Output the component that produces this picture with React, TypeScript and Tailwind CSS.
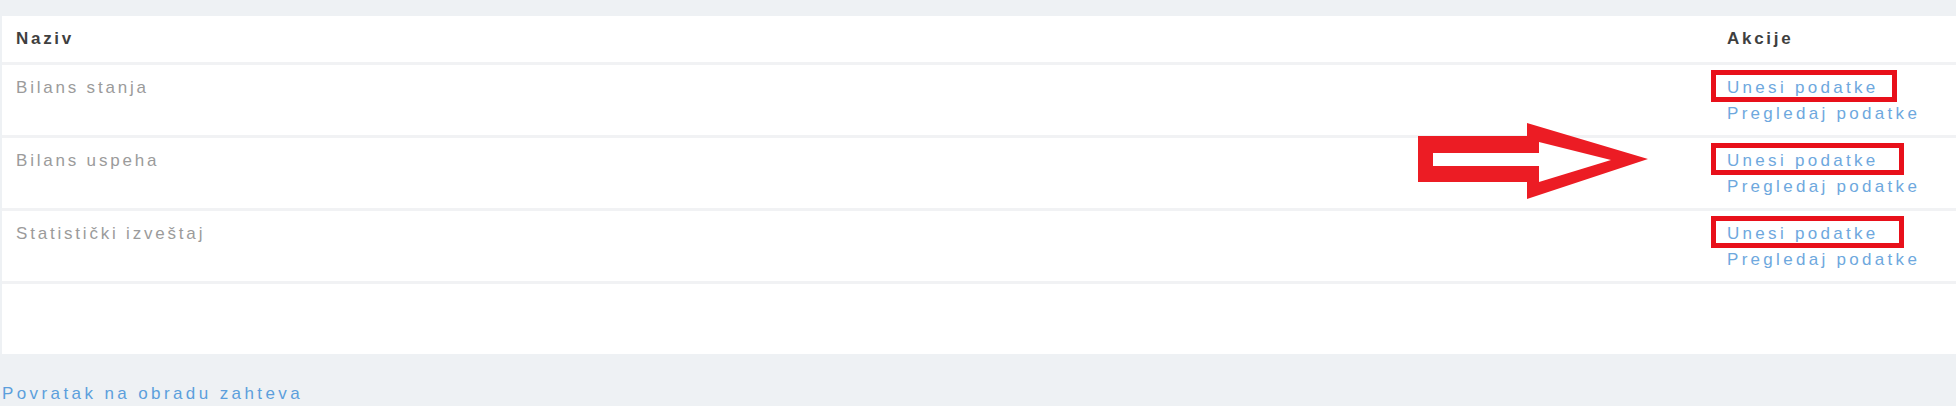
import React from 'react'

type Izvestaj = {
  naziv: string
  boxWidth: string
}

const izvestaji: Izvestaj[] = [
  { naziv: 'Bilans stanja', boxWidth: 'w-[186px]' },
  { naziv: 'Bilans uspeha', boxWidth: 'w-[193px]' },
  { naziv: 'Statistički izveštaj', boxWidth: 'w-[193px]' },
]

const RedArrow = () => (
  <svg
    className="absolute left-[1410px] top-[115px]"
    width="250"
    height="95"
    viewBox="1410 115 250 95"
    aria-hidden="true"
  >
    <polygon
      points="1418,136 1527,136 1527,123 1648,159 1527,199 1527,182 1418,182"
      fill="#ec1c24"
    />
    <polygon
      points="1433,153 1539,153 1539,142 1611,160 1539,182 1539,166 1433,166"
      fill="#ffffff"
    />
  </svg>
)

export default function App() {
  return (
    <div className="relative w-full h-[406px] overflow-hidden bg-[#eef1f4] pt-[16px] font-['Liberation_Sans',Arial,sans-serif] text-[17px]">
      <div className="ml-[2px] bg-white">
        <div className="flex h-[46px] items-center font-bold text-[#3f3f3f] tracking-[2.7px]">
          <div className="flex-1 pl-[14px]">Naziv</div>
          <div className="w-[229px]">Akcije</div>
        </div>

        {izvestaji.map((r) => (
          <div key={r.naziv} className="flex border-t-[3px] border-[#f1f2f4] pt-[10px] pb-[8px] leading-[26px]">
            <div className="flex-1 pl-[14px] text-[#9b9b9b] tracking-[2.8px]">{r.naziv}</div>
            <div className="w-[229px] flex flex-col items-start text-[#6ea8de] tracking-[3.3px]">
              <a className="relative inline-block">
                Unesi podatke
                <span
                  className={`absolute left-[-16px] top-[-5px] h-[32px] ${r.boxWidth} border-[5px] border-[#e8101a]`}
                />
              </a>
              <a>Pregledaj podatke</a>
            </div>
          </div>
        ))}

        <div className="h-[73px] border-t-[3px] border-[#f1f2f4]" />
      </div>

      <div className="mt-[27px] pl-[2px] leading-[26px] text-[#5c9fdc] tracking-[3.4px]">
        Povratak na obradu zahteva
      </div>

      <RedArrow />
    </div>
  )
}
